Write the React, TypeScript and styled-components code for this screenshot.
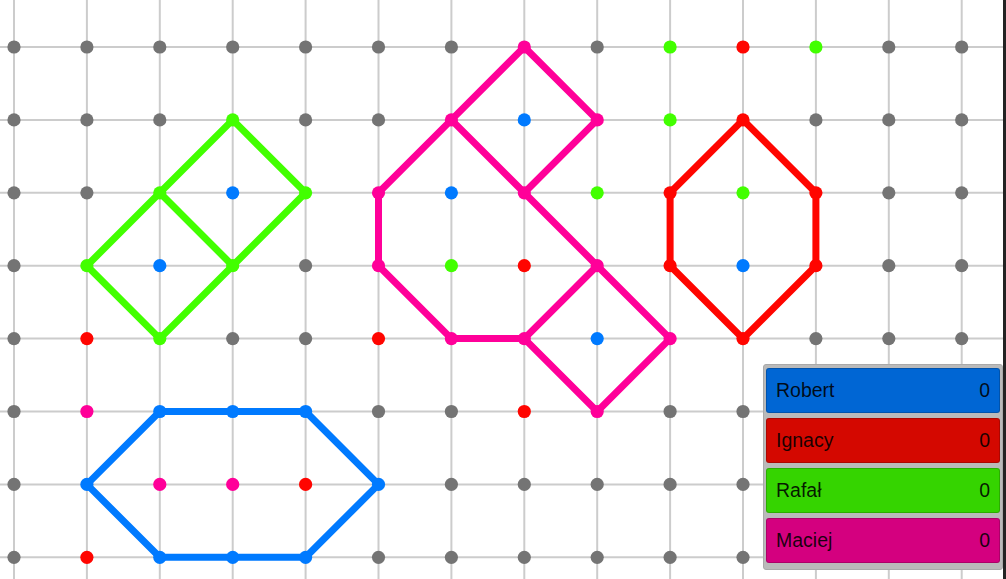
import React from 'react';
import styled, { createGlobalStyle } from 'styled-components';

// board geometry
const STEP = 72.9;
const X0 = 14;
const Y0 = 47;
const COLS = 14;
const ROWS = 8;

const COLORS: Record<string, string> = {
  g: '#747474',
  B: '#007aff',
  R: '#ff0500',
  G: '#42ff00',
  P: '#ff0099',
};

// dot colours, one string per row
const DOTS = [
  'gggggggPgGRGgg',
  'gggGggPBPGRggg',
  'ggGBGPBPGRGRgg',
  'gGBGgPGRPRBRgg',
  'gRGggRPPBPRggg',
  'gPBBBggRPggggg',
  'gBPPRBgggggggg',
  'gRBBBggggggggg',
];

type Pt = [number, number];

const SHAPES: { color: string; lines: Pt[][] }[] = [
  {
    color: COLORS.G,
    lines: [
      [[1, 3], [2, 2], [3, 1], [4, 2], [3, 3], [2, 4], [1, 3]],
      [[2, 2], [3, 3]],
    ],
  },
  {
    color: COLORS.P,
    lines: [
      [[5, 2], [6, 1], [7, 0], [8, 1], [7, 2], [8, 3], [9, 4], [8, 5], [7, 4], [6, 4], [5, 3], [5, 2]],
      [[6, 1], [7, 2]],
      [[7, 4], [8, 3]],
    ],
  },
  {
    color: COLORS.R,
    lines: [[[10, 1], [11, 2], [11, 3], [10, 4], [9, 3], [9, 2], [10, 1]]],
  },
  {
    color: COLORS.B,
    lines: [[[1, 6], [2, 5], [3, 5], [4, 5], [5, 6], [4, 7], [3, 7], [2, 7], [1, 6]]],
  },
];

const PLAYERS = [
  { name: 'Robert', score: 0, color: '#0066d4' },
  { name: 'Ignacy', score: 0, color: '#d40800' },
  { name: 'Rafał', score: 0, color: '#35d400' },
  { name: 'Maciej', score: 0, color: '#d4007f' },
];

const px = (c: number) => X0 + c * STEP;
const py = (r: number) => Y0 + r * STEP;

const GlobalStyle = createGlobalStyle`
  html, body {
    margin: 0;
    padding: 0;
    background: #ffffff;
    font-family: "Liberation Sans", Arial, sans-serif;
  }
`;

// styled components
const Screen = styled.div`
  display: flex;
  width: 1006px;
  height: 579px;
  overflow: hidden;
`;

const Board = styled.div`
  position: relative;
  flex: 1;
  background: #ffffff;
`;

const BoardSvg = styled.svg`
  display: block;
  width: 100%;
  height: 100%;
`;

const Edge = styled.div`
  width: 3px;
  background: #232323;
`;

const ScorePanel = styled.div`
  position: absolute;
  right: 0px;
  bottom: 9px;
  width: 234px;
  padding: 3px 2px 1px 2px;
  background: #bababa;
  border: 1px solid #a9a9a9;
  border-radius: 3px;
  display: flex;
  flex-direction: column;
`;

const PlayerCard = styled.div<{ $color: string }>`
  display: flex;
  align-items: center;
  justify-content: space-between;
  height: 45px;
  box-sizing: border-box;
  margin-bottom: 5px;
  padding: 0 9px 0 9px;
  background: ${(p) => p.$color};
  border: 1px solid rgba(0, 0, 0, 0.18);
  border-radius: 3px;
  color: rgba(0, 0, 0, 0.88);
  font-size: 19.5px;
`;

const PlayerName = styled.span``;

const PlayerScore = styled.span``;

const Grid = () => (
  <g stroke="#cccccc" strokeWidth={2}>
    {Array.from({ length: COLS }, (_, c) => (
      <line key={'v' + c} x1={px(c)} y1={0} x2={px(c)} y2={579} />
    ))}
    {Array.from({ length: ROWS }, (_, r) => (
      <line key={'h' + r} x1={0} y1={py(r)} x2={1006} y2={py(r)} />
    ))}
  </g>
);

const App = () => {
  return (
    <Screen>
      <GlobalStyle />
      <Board>
        <BoardSvg viewBox="0 0 1003 579">
          <Grid />
          {SHAPES.map((shape, i) => (
            <g key={i} stroke={shape.color} strokeWidth={7} fill="none" strokeLinejoin="round" strokeLinecap="round">
              {shape.lines.map((pts, j) => (
                <polyline key={j} points={pts.map(([c, r]) => `${px(c)},${py(r)}`).join(' ')} />
              ))}
            </g>
          ))}
          {DOTS.map((row, r) =>
            row.split('').map((code, c) => (
              <circle key={r + '-' + c} cx={px(c)} cy={py(r)} r={6.6} fill={COLORS[code]} />
            ))
          )}
        </BoardSvg>
        <ScorePanel>
          {PLAYERS.map((player) => (
            <PlayerCard key={player.name} $color={player.color}>
              <PlayerName>{player.name}</PlayerName>
              <PlayerScore>{player.score}</PlayerScore>
            </PlayerCard>
          ))}
        </ScorePanel>
      </Board>
      <Edge />
    </Screen>
  );
};

export default App;
